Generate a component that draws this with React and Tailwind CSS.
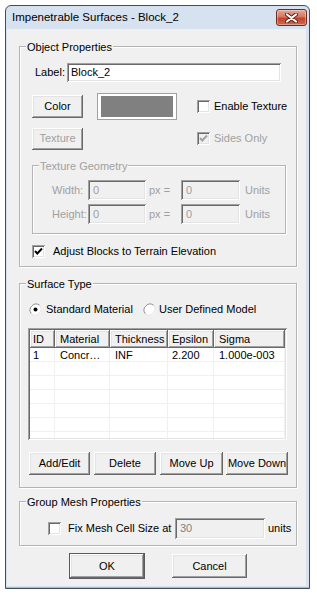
const SUNKEN =
  'shadow-[inset_1px_1px_#a0a0a0,inset_-1px_-1px_#ffffff,inset_2px_2px_#696969,inset_-2px_-2px_#e3e3e3]';
const RAISED =
  'shadow-[inset_-1px_-1px_#696969,inset_1px_1px_#ffffff,inset_-2px_-2px_#a0a0a0,inset_2px_2px_#e3e3e3]';

const COLUMNS = [
  { key: 'id', label: 'ID', width: 'w-[25px]', pad: 'pl-[3px]' },
  { key: 'material', label: 'Material', width: 'w-[55px]', pad: 'pl-[5px]' },
  { key: 'thickness', label: 'Thickness', width: 'w-[58px]', pad: 'pl-[5px]' },
  { key: 'epsilon', label: 'Epsilon', width: 'w-[46px]', pad: 'pl-[4px]' },
  { key: 'sigma', label: 'Sigma', width: 'w-[71px]', pad: 'pl-[5px]' },
];

const ROWS = [
  { id: '1', material: 'Concr…', thickness: 'INF', epsilon: '2.200', sigma: '1.000e-003' },
  {}, {}, {}, {}, {}, {},
];

const Button = ({ children, className = '', disabled = false }) => (
  <button
    type="button"
    className={`flex shrink-0 items-center justify-center bg-[#f0f0f0] ${RAISED} ${
      disabled ? 'text-[#a0a0a0]' : 'text-black'
    } ${className}`}
  >
    {children}
  </button>
);

const Checkbox = ({ checked = false, disabled = false }) => (
  <span
    className={`flex h-[13px] w-[13px] shrink-0 items-center justify-center ${SUNKEN} ${
      disabled ? 'bg-[#f0f0f0]' : 'bg-white'
    }`}
  >
    {checked && (
      <svg width="9" height="9" viewBox="0 0 9 9">
        <polyline
          points="1,4 3.3,6.5 8,1.5"
          fill="none"
          stroke={disabled ? '#a0a0a0' : '#000'}
          strokeWidth="1.9"
        />
      </svg>
    )}
  </span>
);

const Radio = ({ checked = false }) => (
  <svg width="13" height="13" viewBox="0 0 13 13" className="shrink-0">
    <circle cx="6.5" cy="6.5" r="6" fill="#ffffff" />
    <path d="M2.3 10.7 A6 6 0 0 1 10.7 2.3" fill="none" stroke="#8a8a8a" strokeWidth="1" />
    <path d="M10.7 2.3 A6 6 0 0 1 2.3 10.7" fill="none" stroke="#e3e3e3" strokeWidth="1" />
    {checked && <circle cx="6.5" cy="6.5" r="2" fill="#000" />}
  </svg>
);

const Field = ({ value, className = '', disabled = false }) => (
  <div
    className={`h-full shrink-0 pl-[5px] leading-[20px] ${SUNKEN} ${
      disabled ? 'bg-[#f0f0f0] text-[#a0a0a0]' : 'bg-white text-black'
    } ${className}`}
  >
    {value}
  </div>
);

const Group = ({ title, className = '', disabled = false, children }) => (
  <div className={`border border-[#b4b4b4] shadow-[inset_1px_1px_#ffffff,1px_1px_#ffffff] ${className}`}>
    <div
      className={`-mb-[7px] -mt-[7px] ml-[6px] h-[14px] w-fit bg-[#f0f0f0] px-[1px] leading-[14px] ${
        disabled ? 'text-[#a0a0a0]' : 'text-black'
      }`}
    >
      {title}
    </div>
    {children}
  </div>
);

const CloseButton = () => (
  <div className="flex h-[17px] w-[31px] items-center justify-center rounded-[3px] border border-[#6e2c21] bg-[linear-gradient(#eaa797,#d47762_45%,#c2442c_55%,#cf6a4e)] shadow-[inset_0_0_0_1px_rgba(255,255,255,0.35)]">
    <svg width="13" height="10" viewBox="0 0 13 10">
      <path d="M2 1.5 L11 8.5 M11 1.5 L2 8.5" stroke="#5a2118" strokeWidth="4" strokeLinecap="round" />
      <path d="M2 1.5 L11 8.5 M11 1.5 L2 8.5" stroke="#ffffff" strokeWidth="2.2" strokeLinecap="round" />
    </svg>
  </div>
);

const GeometryRow = ({ label, className = '' }) => (
  <div className={`flex h-[20px] items-center pl-[19px] text-[#a0a0a0] ${className}`}>
    <span className="w-[36px]">{label}</span>
    <Field value="0" disabled className="w-[58px]" />
    <span className="w-[35px] pl-[3px]">px =</span>
    <Field value="0" disabled className="w-[59px]" />
    <span className="ml-[5px]">Units</span>
  </div>
);

export default function App() {
  return (
    <div className="h-[594px] w-[317px] bg-white pl-[5px] pt-[5px] font-['Liberation_Sans',Arial,sans-serif] text-[11px] leading-[13px] text-black">
      <div className="flex h-[584px] w-[305px] flex-col overflow-hidden rounded-t-[6px] border border-[#434d58] bg-[#d6e2ef] shadow-[inset_0_-1px_#9cc0e4]">
        {/* title bar */}
        <div className="flex h-[23px] shrink-0 items-center justify-between pl-[6px] pr-[2px]">
          <span className="text-[11.5px]">Impenetrable Surfaces - Block_2</span>
          <CloseButton />
        </div>

        <div className="mb-[2px] ml-[1px] mr-[3px] flex-1 bg-[#f0f0f0]">
          {/* Object Properties */}
          <Group title="Object Properties" className="ml-[12px] mt-[17px] h-[221px] w-[278px]">
            <div className="mt-[16px] flex h-[19px] items-center pl-[15px]">
              <span className="w-[32px]">Label:</span>
              <div className={`h-[19px] w-[214px] bg-white pl-[4px] leading-[19px] ${SUNKEN}`}>Block_2</div>
            </div>

            <div className="mt-[11px] flex h-[27px] items-center pl-[12px]">
              <Button className="h-[23px] w-[51px]">Color</Button>
              <div className="ml-[14px] h-[27px] w-[80px] border border-[#a0a0a0] bg-white px-[3px] py-[2px]">
                <div className="h-full w-full bg-[#808080]" />
              </div>
              <span className="ml-[20px]">
                <Checkbox />
              </span>
              <span className="ml-[4px]">Enable Texture</span>
            </div>

            <div className="mt-[7px] flex h-[23px] items-center pl-[12px]">
              <Button disabled className="h-[22px] w-[51px]">Texture</Button>
              <span className="ml-[114px]">
                <Checkbox checked disabled />
              </span>
              <span className="ml-[4px] text-[#a0a0a0]">Sides Only</span>
            </div>

            <Group title="Texture Geometry" disabled className="ml-[12px] mt-[15px] h-[69px] w-[254px]">
              <GeometryRow label="Width:" className="mt-[14px]" />
              <GeometryRow label="Height:" className="mt-[4px]" />
            </Group>

            <div className="mt-[11px] flex h-[13px] items-center pl-[12px]">
              <Checkbox checked />
              <span className="ml-[8px]">Adjust Blocks to Terrain Elevation</span>
            </div>
          </Group>

          {/* Surface Type */}
          <Group title="Surface Type" className="ml-[12px] mt-[16px] h-[205px] w-[278px]">
            <div className="mt-[19px] flex h-[13px] items-center pl-[9px]">
              <div className="flex w-[114px] items-center">
                <Radio checked />
                <span className="ml-[4px]">Standard Material</span>
              </div>
              <Radio />
              <span className="ml-[3px]">User Defined Model</span>
            </div>

            <div className={`ml-[8px] mt-[12px] h-[112px] w-[259px] overflow-hidden bg-white p-[2px] ${SUNKEN}`}>
              <div className="flex h-[18px] bg-[#f0f0f0]">
                {COLUMNS.map(col => (
                  <div key={col.key} className={`h-full shrink-0 leading-[18px] ${col.width} ${col.pad} ${RAISED}`}>
                    {col.label}
                  </div>
                ))}
              </div>
              {ROWS.map((row, i) => (
                <div key={i} className="flex h-[14px] border-b border-[#f0f0f0]">
                  {COLUMNS.map(col => (
                    <div
                      key={col.key}
                      className={`h-full shrink-0 border-r border-[#f0f0f0] leading-[14px] ${col.width} ${col.pad}`}
                    >
                      {row[col.key]}
                    </div>
                  ))}
                </div>
              ))}
            </div>

            <div className="mt-[12px] flex h-[23px] pl-[9px]">
              <Button className="h-[23px] w-[61px]">Add/Edit</Button>
              <Button className="ml-[4px] h-[23px] w-[62px]">Delete</Button>
              <Button className="ml-[4px] h-[23px] w-[63px]">Move Up</Button>
              <Button className="ml-[3px] h-[23px] w-[62px]">Move Down</Button>
            </div>
          </Group>

          {/* Group Mesh Properties */}
          <Group title="Group Mesh Properties" className="ml-[12px] mt-[13px] h-[45px] w-[278px]">
            <div className="mt-[16px] flex h-[21px] items-center pl-[28px]">
              <Checkbox />
              <span className="ml-[7px] w-[107px]">Fix Mesh Cell Size at</span>
              <div className={`h-[21px] w-[90px] bg-[#f0f0f0] pl-[5px] leading-[21px] text-[#808080] ${SUNKEN}`}>30</div>
              <span className="ml-[3px]">units</span>
            </div>
          </Group>

          <div className="mt-[8px] flex pl-[63px]">
            <Button className="h-[24px] w-[74px] outline outline-1 outline-[#5a5a5a]">OK</Button>
            <Button className="ml-[28px] h-[24px] w-[75px]">Cancel</Button>
          </div>
        </div>
      </div>
    </div>
  );
}
